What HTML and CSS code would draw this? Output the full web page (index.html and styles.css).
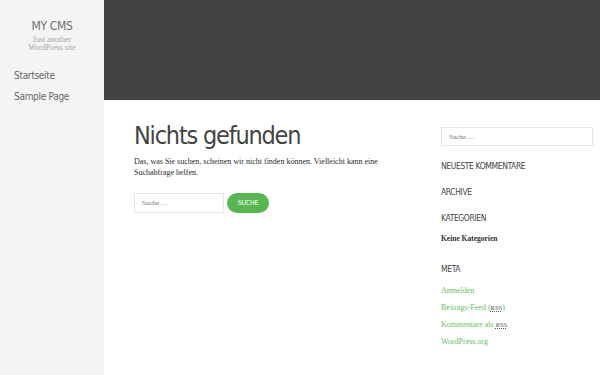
FILE: index.html
```html
<!DOCTYPE html>
<html lang="de">
<head>
    <meta charset="UTF-8">
    <meta name="viewport" content="width=device-width, initial-scale=1.0">
    <title>Nichts gefunden – MY CMS</title>
    <link rel="stylesheet" href="styles.css">
</head>
<body>
    <div class="sidebar"> <!-- linke Seitenleiste -->
        <div class="branding">
            <div class="site-title">MY CMS</div>
            <div class="site-desc">Just another WordPress site</div>
        </div>
        <div class="menu">
            <a href="#">Startseite</a>
            <a href="#">Sample Page</a>
        </div>
    </div>
    <div class="page">
        <div class="header"></div>
        <div class="content">
            <div class="main">
                <h1>Nichts gefunden</h1>
                <p>Das, was Sie suchen, scheinen wir nicht finden können. Vielleicht kann eine Suchabfrage helfen.</p>
                <form class="search">
                    <input type="text" placeholder="Suche …">
                    <button type="button">Suche</button>
                </form>
            </div>
            <div class="widgets">
                <input class="widget-search" type="text" placeholder="Suche …">
                <h3>Neueste Kommentare</h3>
                <h3>Archive</h3>
                <h3>Kategorien</h3>
                <div class="plain">Keine Kategorien</div>
                <h3 class="meta">Meta</h3>
                <div class="links">
                    <a href="#">Anmelden</a>
                    <a href="#">Beitrags-Feed (<abbr>RSS</abbr>)</a>
                    <a href="#">Kommentare als <abbr>RSS</abbr></a>
                    <a href="#">WordPress.org</a>
                </div>
            </div>
        </div>
    </div>
</body>
</html>
```

FILE: styles.css
```css
body {
    margin: 0;
    padding: 0;
    display: flex;
    min-height: 100vh;
    font-family: "Liberation Serif", "DejaVu Serif", serif;
    background-color: #fff;
}
.sidebar {
    width: 104px;
    flex-shrink: 0;
    background-color: #f4f4f4;
}
.branding {
    text-align: center;
    padding-top: 18px;
}
.site-title {
    font-family: "DejaVu Sans Condensed", "DejaVu Sans", sans-serif;
    font-size: 12px;
    line-height: 16px;
    letter-spacing: -0.3px;
    color: #6f6f6f;
}
.site-desc {
    font-size: 8px;
    line-height: 8px;
    color: #a5a5a5;
    width: 70px;
    margin: 2px auto 0;
}
.menu {
    display: flex;
    flex-direction: column;
    gap: 7px;
    padding: 17px 0 0 14px;
}
.menu a {
    font-family: "DejaVu Sans Condensed", "DejaVu Sans", sans-serif;
    font-size: 10px;
    line-height: 14px;
    letter-spacing: -0.3px;
    color: #666;
    text-decoration: none;
}
.page {
    flex: 1;
    display: flex;
    flex-direction: column;
}
.header {
    height: 100px;
    background-color: #414342;
}
.content {
    display: flex;
    gap: 30px;
    padding: 19px 7px 0 30px;
}
.main {
    flex: 1;
}
.main h1 {
    margin: 0;
    font-family: "DejaVu Sans Condensed", "DejaVu Sans", sans-serif;
    font-weight: normal;
    font-size: 25px;
    line-height: 34px;
    letter-spacing: -1.2px;
    color: #444;
}
.main p {
    margin: 3px 0 0;
    font-size: 8px;
    line-height: 11px;
    color: #2a2a2a;
    width: 250px;
}
.search {
    display: flex;
    align-items: center;
    gap: 3px;
    margin-top: 15px;
}
.search input, .widget-search {
    box-sizing: border-box;
    border: 1px solid #e6e6e6;
    font-family: "Liberation Serif", serif;
    font-size: 7px;
    padding: 0 7px;
    color: #999;
    outline: none;
}
.search input {
    width: 90px;
    height: 20px;
}
.search button {
    width: 42px;
    height: 20px;
    border: none;
    border-radius: 10px;
    background-color: #59b752;
    color: #fff;
    font-family: "DejaVu Sans Condensed", "DejaVu Sans", sans-serif;
    font-size: 7px;
    letter-spacing: -0.2px;
    text-transform: uppercase;
    padding: 0;
}
.widgets {
    width: 152px;
    flex-shrink: 0;
    display: flex;
    flex-direction: column;
    padding-top: 8px;
}
.widget-search {
    width: 152px;
    height: 19px;
}
.widgets h3 {
    margin: 14px 0 0;
    font-family: "DejaVu Sans Condensed", "DejaVu Sans", sans-serif;
    font-weight: normal;
    font-size: 8.5px;
    line-height: 12px;
    letter-spacing: -0.4px;
    text-transform: uppercase;
    color: #444;
}
.widgets h3.meta {
    margin-top: 20px;
}
.plain {
    margin-top: 10px;
    font-size: 7.5px;
    font-weight: bold;
    color: #333;
}
.links {
    display: flex;
    flex-direction: column;
    gap: 8px;
    margin-top: 11px;
}
.links a {
    font-size: 8px;
    line-height: 9px;
    color: #67c15e;
    text-decoration: none;
}
.links abbr {
    font-size: 6.5px;
    color: #555;
    text-decoration: underline dotted;
}
```
